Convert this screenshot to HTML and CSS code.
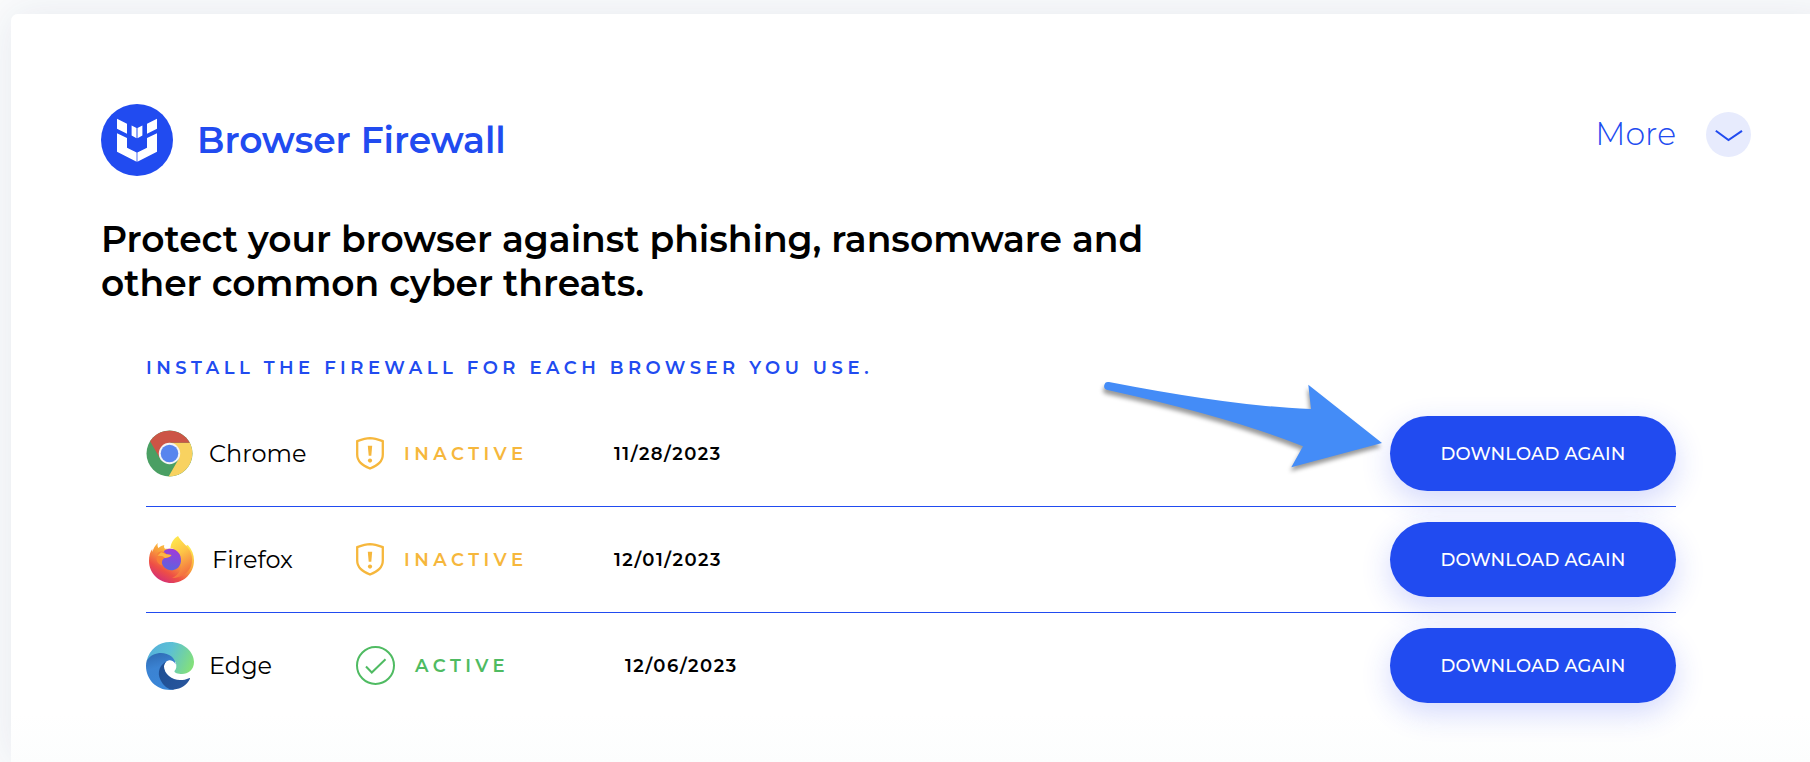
FILE: index.html
```html
<!DOCTYPE html>
<html lang="en">
<head>
<meta charset="UTF-8">
<meta name="viewport" content="width=device-width, initial-scale=1.0">
<title>Browser Firewall</title>
<link rel="stylesheet" href="styles.css">
</head>
<body>

<main class="card">
  <header class="card-header">
    <svg class="logo" viewBox="0 0 72 72">
      <circle cx="36" cy="36" r="36" fill="#214bf0"/>
      <path fill="#fff" d="M16 14.7 26 19.7V29.7L16 24.7ZM56 14.7 46 19.7V29.7L56 24.7ZM30.6 21.6 35.5 24V34.3L30.6 31.4ZM41.4 21.6 36.5 24V34.3L41.4 31.4ZM16 29.3 26 34V43.8L35.6 48.4V57.7L16 47.8ZM56 29.3 46 34V43.8L36.4 48.4V57.7L56 47.8Z"/>
    </svg>
    <h1>Browser Firewall</h1>
    <button class="more" type="button">
      <span class="more-label">More</span>
      <svg class="more-icon" viewBox="0 0 45 45">
        <circle cx="22.5" cy="22.5" r="22.5" fill="#e7ebfd"/>
        <path d="M9.8 18.8 22.5 28 36 18.8" fill="none" stroke="#214bf0" stroke-width="2"/>
      </svg>
    </button>
  </header>

  <h2>Protect your browser against phishing, ransomware and<br>other common cyber threats.</h2>

  <!-- Browser list -->
  <section class="browsers">
    <h3>Install the firewall for each browser you use.</h3>

    <div class="browser-row">
      <div class="browser">
        <svg class="browser-icon" viewBox="-.5 -.5 48 47">
          <circle cx="23" cy="23" r="23" fill="#4a9f63"/>
          <path fill="#f8d260" d="M43.3 12.3A23 23 0 0 1 22.1 45.9L32.3 28.3 23 12.3Z"/>
          <path fill="#cc5546" d="M3.6 10.8A23 23 0 0 1 43.3 12.3H23L13.7 28.3Z"/>
          <circle cx="23" cy="23" r="10.7" fill="#f3f4f5"/>
          <circle cx="23" cy="23" r="8.8" fill="#5785ee"/>
        </svg>
        <span class="browser-name">Chrome</span>
      </div>
      <div class="status inactive">
        <svg class="shield" viewBox="0 0 28 33">
          <path d="M14 1.2C10.5 1.3 6 2.5 1.2 4.2V17.5C1.2 24.5 6 28 14 31.5 22 28 26.8 24.5 26.8 17.5V4.2C22 2.5 17.5 1.3 14 1.2Z" fill="none" stroke="#f6b73c" stroke-width="2.3"/>
          <path d="M11.8 8.8H16.2L15.3 18.8H12.7Z" fill="#f6b73c"/>
          <circle cx="14" cy="23.6" r="2.1" fill="#f6b73c"/>
        </svg>
        <span>Inactive</span>
      </div>
      <time class="date">11/28/2023</time>
      <button class="download" type="button">Download again</button>
    </div>

    <div class="browser-row">
      <div class="browser firefox">
        <svg class="browser-icon" viewBox="0 0 45 47">
          <defs>
            <linearGradient id="ff-body" x1=".85" y1=".1" x2=".25" y2="1">
              <stop offset="0" stop-color="#fde64d"/>
              <stop offset=".4" stop-color="#f9a03b"/>
              <stop offset=".72" stop-color="#ee4f45"/>
              <stop offset="1" stop-color="#d12a7d"/>
            </linearGradient>
            <linearGradient id="ff-flame" x1="0" y1="0" x2=".3" y2="1">
              <stop offset="0" stop-color="#fff04f"/>
              <stop offset=".5" stop-color="#fdc447"/>
              <stop offset="1" stop-color="#f4733f"/>
            </linearGradient>
            <linearGradient id="ff-globe" x1=".6" y1="0" x2=".4" y2="1">
              <stop offset="0" stop-color="#a13ad9"/>
              <stop offset="1" stop-color="#5c64df"/>
            </linearGradient>
          </defs>
          <path fill="url(#ff-body)" d="M8.7 7C8.3 9 8.6 10.6 9.3 12 11.2 10.3 13 9.5 15.3 9 14.8 10.5 15 11.7 16 12.8H31L38.8 9C43 13.5 45 18.5 45 24.5 45 37 35 47 22.5 47S0 37 0 25C0 20 1 16 3.2 13L3.5 16C4.5 12 6 9.5 8.7 7Z"/>
          <path fill="url(#ff-flame)" d="M29 0C31.5 5 37.5 9 40.5 14 45 22 43.5 32 37 37 33 40.5 28 42 23 42 29 39.5 32 35 32.5 29 33 23 31.5 17.5 27 14 24.5 12.3 22.5 12 21.5 12.2 21.5 7.5 25 2 29 0Z"/>
          <path fill="url(#ff-globe)" d="M15.5 14.5C20 11.5 27 12 30.5 18 32 21 32.5 24.5 31.5 27.5 30 32 26.500 34.300 22.300 34.300 17 34.300 12.600 30 12.600 24.800V20Z"/>
          <path fill="#f88137" d="M8.5 17C11.5 14.5 15 15 17.5 18.2L22.5 19C21.5 21.2 18.500 21.600 15.800 22 13 23.200 12.400 26 13.400 29.500 11 29 8 27 7.500 23Z"/>
          <path fill="#fcb744" d="M12 16.2C14.5 16.5 16 18 17.5 18.2L22.5 19C21.5 21 18.5 21.500 16 22 14.500 20.500 12 19.500 8.4 20Z"/>
        </svg>
        <span class="browser-name">Firefox</span>
      </div>
      <div class="status inactive">
        <svg class="shield" viewBox="0 0 28 33">
          <path d="M14 1.2C10.5 1.3 6 2.5 1.2 4.2V17.5C1.2 24.5 6 28 14 31.5 22 28 26.8 24.5 26.8 17.5V4.2C22 2.5 17.5 1.3 14 1.2Z" fill="none" stroke="#f6b73c" stroke-width="2.3"/>
          <path d="M11.8 8.8H16.2L15.3 18.8H12.7Z" fill="#f6b73c"/>
          <circle cx="14" cy="23.6" r="2.1" fill="#f6b73c"/>
        </svg>
        <span>Inactive</span>
      </div>
      <time class="date">12/01/2023</time>
      <button class="download" type="button">Download again</button>
    </div>

    <div class="browser-row">
      <div class="browser">
        <svg class="browser-icon edge" viewBox="0 0 48 48">
          <defs>
            <linearGradient id="edge-top" x1="0" y1=".3" x2="1" y2=".6">
              <stop offset="0" stop-color="#55b0dc"/>
              <stop offset=".45" stop-color="#5cc0d4"/>
              <stop offset="1" stop-color="#83e07b"/>
            </linearGradient>
            <linearGradient id="edge-left" x1=".3" y1="0" x2=".5" y2="1">
              <stop offset="0" stop-color="#2f6cb5"/>
              <stop offset=".4" stop-color="#3b83d3"/>
              <stop offset="1" stop-color="#3a86d8"/>
            </linearGradient>
            <linearGradient id="edge-bottom" x1="0" y1="0" x2="1" y2=".6">
              <stop offset="0" stop-color="#1d4e93"/>
              <stop offset="1" stop-color="#27559c"/>
            </linearGradient>
          </defs>
          <path fill="url(#edge-top)" d="M.6 19C3.5 7 13 0 24 0 38 0 48 10 48 20 48 28 42 32 36 32 32 32 28 31 28.5 29 30.5 27 31 24 29.5 20L14 14Z"/>
          <path fill="url(#edge-left)" d="M.6 19C4 13 10 11 15 11 23 11 29.5 16 29.6 22.5 28.5 19.5 25.5 17.8 22.5 18.5 18.5 19.5 17 24 18.5 28L20 42 28 47.6C26.5 47.9 25.5 48 24 48 10 48 0 37 0 24 0 22 .2 20.5.6 19Z"/>
          <path fill="url(#edge-bottom)" d="M22 18.5C14 22 10.5 30 14.5 38 17.5 44 22.5 48 28 47.6 35 46.8 41 43 44 36.8 44.2 36 43.6 35.8 43 36.2 40 37.5 37.5 38 34 38 26 38 18 32 18 24.5 18 21.5 20 19.2 22 18.5Z"/>
        </svg>
        <span class="browser-name">Edge</span>
      </div>
      <div class="status active">
        <svg class="check" viewBox="0 0 39 39">
          <circle cx="19.5" cy="19.5" r="18.5" fill="none" stroke="#4fbb62" stroke-width="2"/>
          <path d="M10 20.5 15.8 26.5 29.5 13.3" fill="none" stroke="#4fbb62" stroke-width="2"/>
        </svg>
        <span>Active</span>
      </div>
      <time class="date">12/06/2023</time>
      <button class="download" type="button">Download again</button>
    </div>

    <!-- Pointer to the first download button -->
    <svg class="pointer" viewBox="0 0 290 100">
      <path fill="#448cf7" d="M9 2Q135 26.5 211 29L208.3 4.7 282 63 191.3 87.3 203 66.3Q130 37 7.5 10A4 4 0 0 1 9 2Z"/>
    </svg>
  </section>
</main>

</body>
</html>
```
FILE: styles.css
```css
/* General styles */
* {
  box-sizing: border-box;
}

body {
  margin: 0;
  height: 762px;
  padding: 14px 0 0 11px;
  overflow: hidden;
  background-color: #fafbfc;
  font-family: Montserrat, Inter, sans-serif;
  color: #000;
}

h1,
h2,
h3 {
  margin: 0;
}

button {
  border: none;
  padding: 0;
  font-family: inherit;
  cursor: pointer;
}

.card {
  width: 1820px;
  height: 748px;
  padding: 90px 80px 0 90px;
  border-radius: 7px 7px 0 0;
  background: linear-gradient(#fff 700px, #fcfdfd 748px);
  box-shadow: 0 0 40px rgba(30, 60, 110, 0.09);
}

/* Header */
.card-header {
  display: flex;
  align-items: center;
  height: 72px;
}

.logo {
  width: 72px;
  height: 72px;
}

h1 {
  margin-left: 24px;
  font-size: 36px;
  font-weight: 600;
  line-height: 44px;
  color: #214bf0;
}

.more {
  display: flex;
  align-items: center;
  gap: 30px;
  margin: -11px 0 0 auto;
  background: none;
  color: #214bf0;
}

.more-label {
  padding-bottom: 2px;
  font-size: 31.6px;
  font-weight: 300;
}

.more-icon {
  width: 45px;
  height: 45px;
}

h2 {
  margin-top: 41px;
  font-size: 36px;
  font-weight: 600;
  line-height: 44px;
}

/* Browser list */
.browsers {
  position: relative;
  width: 1530px;
  margin: 52px 0 0 45px;
}

h3 {
  height: 44px;
  font-size: 18px;
  font-weight: 600;
  line-height: 22px;
  letter-spacing: 4.5px;
  text-transform: uppercase;
  color: #214bf0;
}

.browser-row {
  display: flex;
  align-items: center;
  height: 106px;
  border-bottom: 1px solid #214bf0;
}

.browser-row:nth-of-type(3) {
  border-bottom-color: transparent;
}

.browser {
  display: flex;
  align-items: center;
  width: 210px;
}

.browser-icon {
  width: 48px;
  height: 47px;
}

.browser-icon.edge {
  height: 48px;
}

.browser-name {
  margin-left: 15px;
  font-size: 24px;
}

.firefox {
  padding-left: 3px;
}

.firefox .browser-icon {
  width: 45px;
}

.firefox .browser-name {
  margin-left: 18px;
}

.status {
  display: flex;
  align-items: center;
  font-size: 18px;
  font-weight: 600;
  letter-spacing: 4.5px;
  text-transform: uppercase;
}

.inactive {
  gap: 20px;
  width: 258px;
  color: #f6b73c;
}

.active {
  gap: 20px;
  width: 269px;
  color: #4fbb62;
}

.shield {
  width: 28px;
  height: 33px;
}

.check {
  width: 39px;
  height: 39px;
}

.date {
  font-size: 18px;
  font-weight: 600;
  letter-spacing: 1.5px;
}

.download {
  width: 286px;
  height: 75px;
  margin-left: auto;
  border-radius: 38px;
  background-color: #214bf0;
  box-shadow: 0 10px 30px rgba(33, 60, 240, 0.2);
  color: #fff;
  font-size: 18px;
  font-weight: 500;
  letter-spacing: 0.15px;
  text-transform: uppercase;
}

.pointer {
  position: absolute;
  top: 23px;
  left: 954px;
  width: 290px;
  height: 100px;
  filter: drop-shadow(-1px 4px 2px rgba(0, 0, 0, 0.4));
}
```
